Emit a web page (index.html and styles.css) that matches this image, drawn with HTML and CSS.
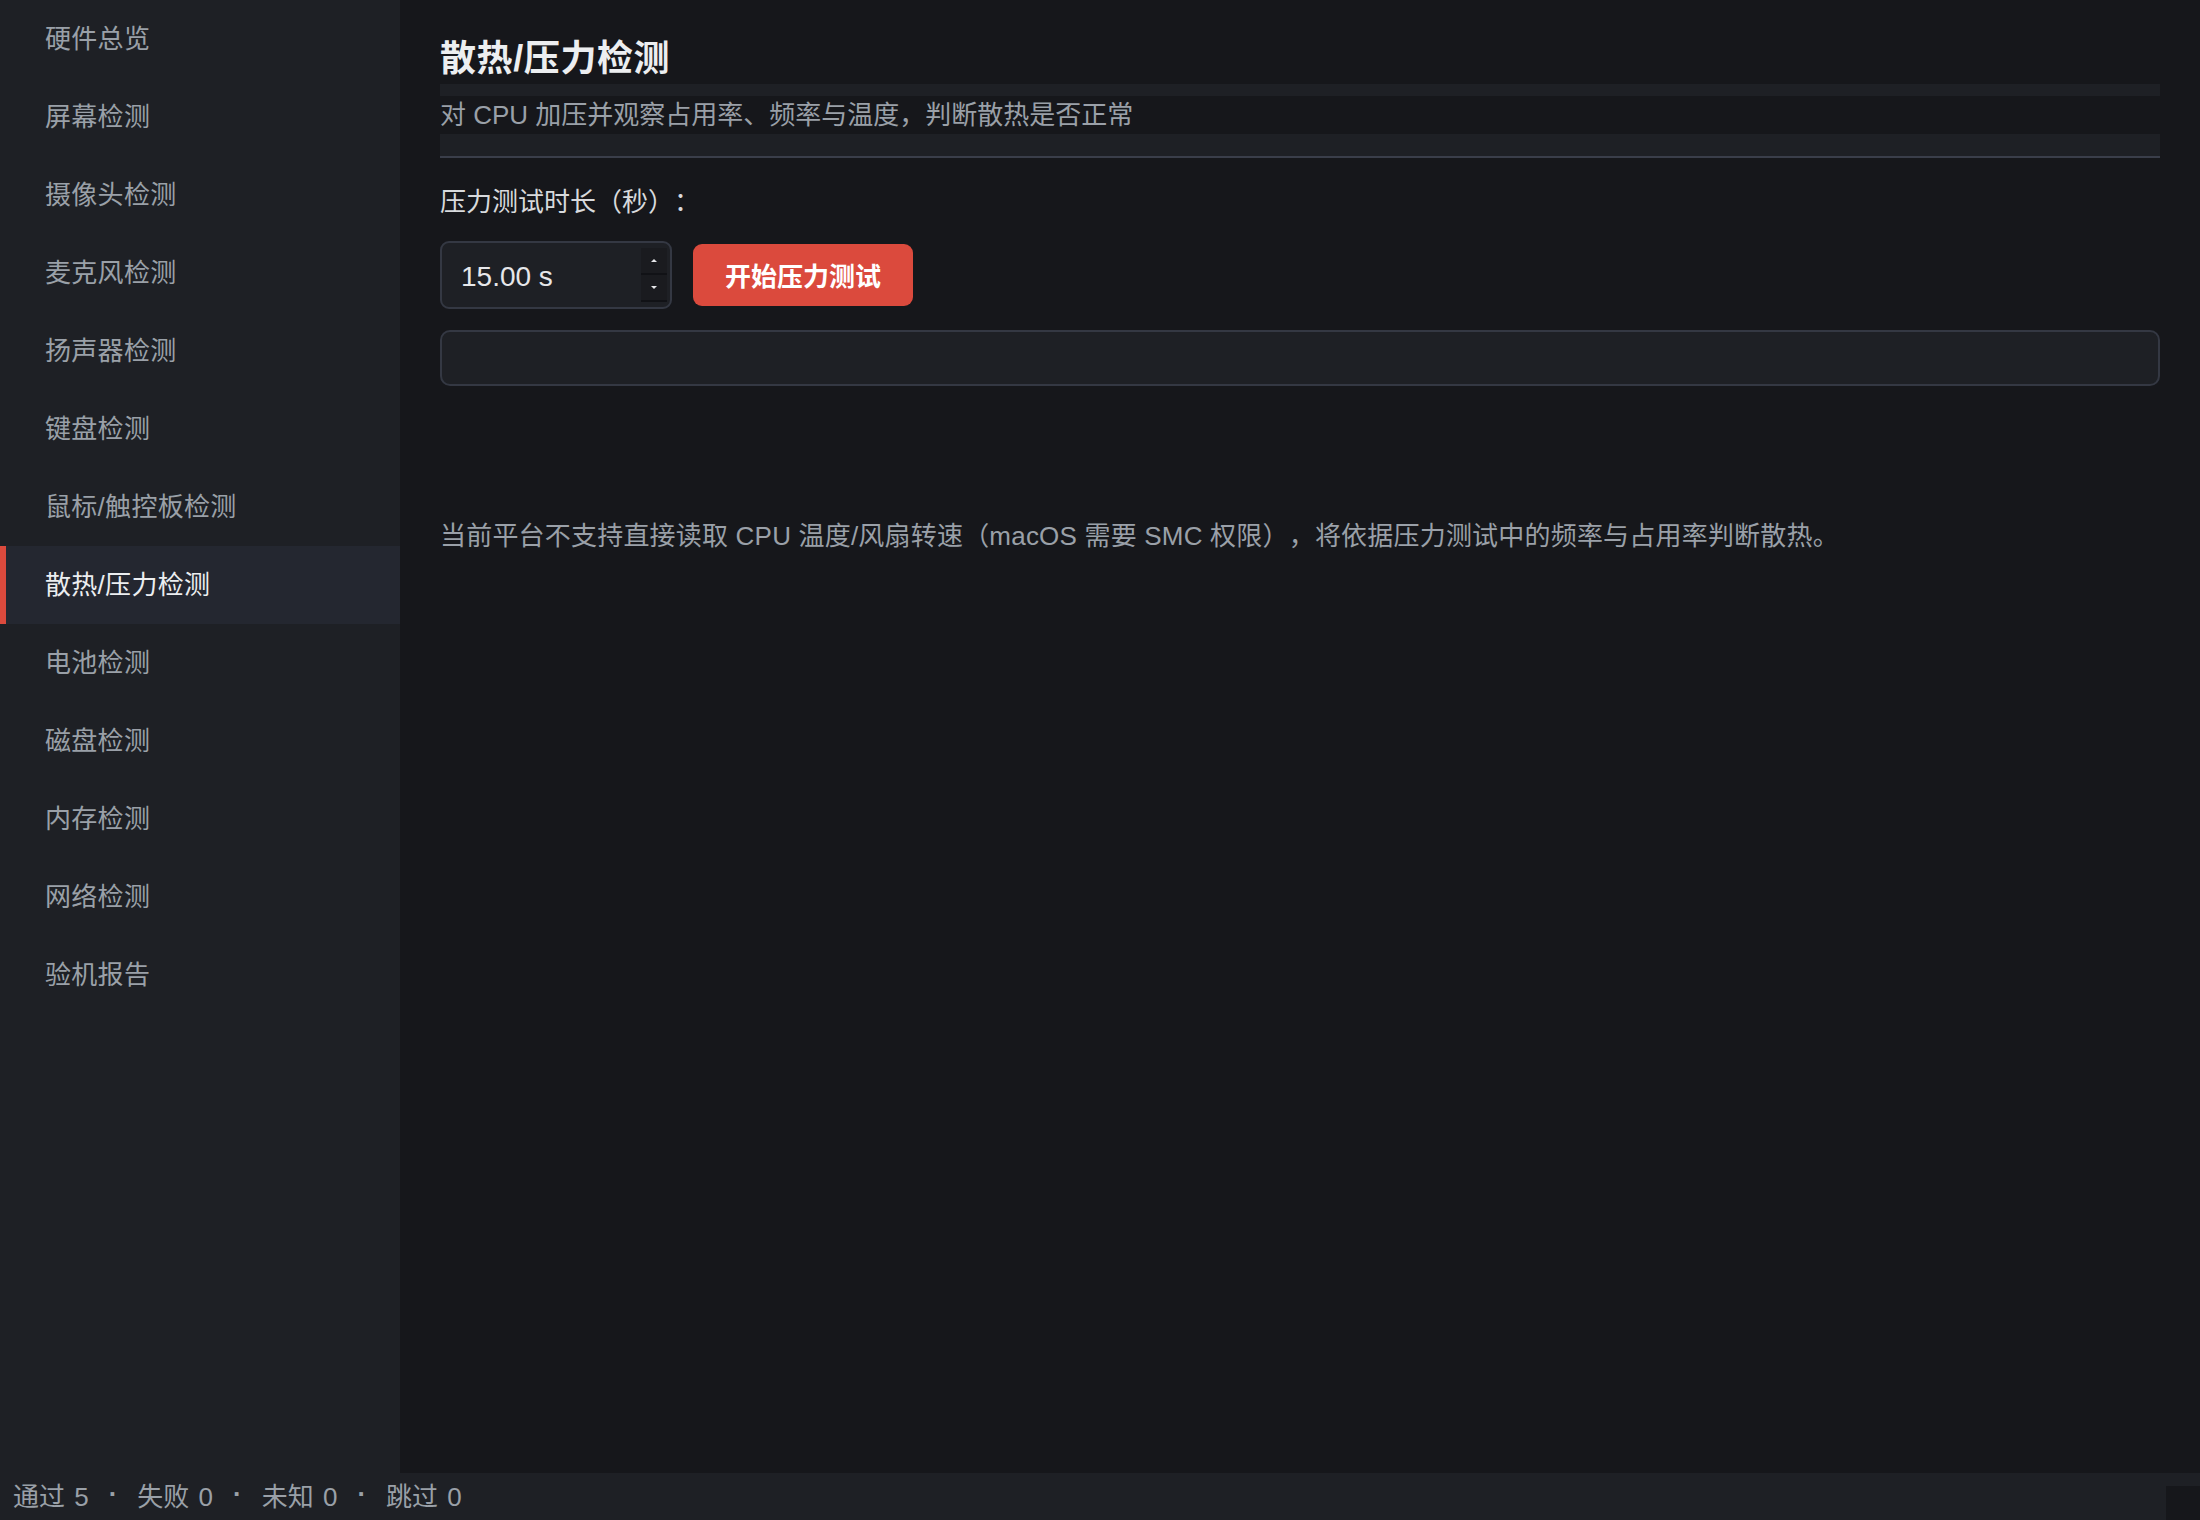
FILE: index.html
```html
<!DOCTYPE html>
<html lang="zh-CN">

<head>
    <meta charset="UTF-8">
    <meta name="viewport" content="width=device-width, initial-scale=1.0">
    <title>验机助手</title>
    <link rel="stylesheet" href="styles.css">
</head>

<body>

    <div id="app">
        <nav class="sidebar">
            <a class="nav-item">硬件总览</a>
            <a class="nav-item">屏幕检测</a>
            <a class="nav-item">摄像头检测</a>
            <a class="nav-item">麦克风检测</a>
            <a class="nav-item">扬声器检测</a>
            <a class="nav-item">键盘检测</a>
            <a class="nav-item">鼠标/触控板检测</a>
            <a class="nav-item active">散热/压力检测</a>
            <a class="nav-item">电池检测</a>
            <a class="nav-item">磁盘检测</a>
            <a class="nav-item">内存检测</a>
            <a class="nav-item">网络检测</a>
            <a class="nav-item">验机报告</a>
        </nav>

        <main class="page">
            <h1 class="page-title">散热/压力检测</h1>
            <div class="desc-box">
                <p class="desc">对 CPU 加压并观察占用率、频率与温度，判断散热是否正常</p>
            </div>

            <label class="field-label">压力测试时长（秒）：</label>

            <div class="control-row">
                <div class="spinbox">
                    <span class="spin-value">15.00 s</span>
                    <div class="spin-btns">
                        <button class="spin-btn"><span class="arrow-up"></span></button>
                        <button class="spin-btn"><span class="arrow-down"></span></button>
                    </div>
                </div>
                <button class="btn-start">开始压力测试</button>
            </div>

            <div class="progress"></div>

            <p class="note">当前平台不支持直接读取 CPU 温度/风扇转速（macOS 需要 SMC 权限），将依据压力测试中的频率与占用率判断散热。</p>
        </main>
    </div>

    <footer class="statusbar">
        <div class="stats">
            <span>通过 5</span>
            <span class="dot">·</span>
            <span>失败 0</span>
            <span class="dot">·</span>
            <span>未知 0</span>
            <span class="dot">·</span>
            <span>跳过 0</span>
        </div>
        <div class="grip"></div>
    </footer>

</body>

</html>
```

FILE: styles.css
```css
* {
    padding: 0;
    margin: 0;
    box-sizing: border-box;
}

body {
    height: 100vh;
    display: flex;
    flex-direction: column;
    background-color: #16171b;
    font-family: "Liberation Sans", "Noto Sans CJK SC", sans-serif;
    font-size: 26px;
    color: #9aa0a8;
    text-spacing-trim: space-all;
}

#app {
    flex: 1;
    display: flex;
    min-height: 0;
}

/* left menu */
.sidebar {
    width: 400px;
    flex-shrink: 0;
    background-color: #1e2025;
    display: flex;
    flex-direction: column;
}

.nav-item {
    height: 78px;
    display: flex;
    align-items: center;
    padding-left: 39px;
    padding-bottom: 5px;
    color: #9aa0a8;
    border-left: 6px solid transparent;
    letter-spacing: 0.3px;
}

.nav-item.active {
    background-color: #242730;
    border-left-color: #db4a3d;
    color: #eceef0;
}

/* right side */
.page {
    flex: 1;
    padding: 36px 40px 0 40px;
}

.page-title {
    font-size: 36px;
    line-height: 45px;
    margin-bottom: 3px;
    font-weight: bold;
    color: #eceef0;
    letter-spacing: 0.6px;
}

.desc-box {
    background-color: #1e2025;
    padding: 12px 0 22px 0;
    border-bottom: 2px solid #3a3e4a;
}

.desc {
    background-color: #16171b;
    line-height: 38px;
    color: #9aa0a8;
}

.field-label {
    display: block;
    margin-top: 24px;
    padding-top: 2px;
    line-height: 36px;
    color: #d8dadd;
}

.control-row {
    display: flex;
    align-items: center;
    gap: 21px;
    margin-top: 21px;
}

.spinbox {
    width: 232px;
    height: 68px;
    display: flex;
    align-items: center;
    background-color: #1e2025;
    border: 2px solid #343843;
    border-radius: 9px;
    padding: 0 3px 0 19px;
}

.spin-value {
    flex: 1;
    font-size: 28px;
    padding-top: 3px;
    color: #e6e7ea;
}

.spin-btns {
    display: flex;
    flex-direction: column;
    width: 26px;
}

.spin-btn {
    height: 27px;
    border: none;
    border-bottom: 2px solid #111216;
    background-color: #1a1b1f;
    display: flex;
    align-items: center;
    justify-content: center;
}

.arrow-up {
    border-left: 3px solid transparent;
    border-right: 3px solid transparent;
    border-bottom: 3px solid #e6e7ea;
}

.arrow-down {
    border-left: 3px solid transparent;
    border-right: 3px solid transparent;
    border-top: 3px solid #e6e7ea;
}

.btn-start {
    height: 62px;
    padding: 0 32px 2px 32px;
    border: none;
    border-radius: 9px;
    background-color: #db4a3d;
    color: #ffffff;
    font-family: inherit;
    font-size: 26px;
    font-weight: bold;
}

.progress {
    margin-top: 21px;
    height: 56px;
    background-color: #1e2025;
    border: 2px solid #343843;
    border-radius: 10px;
}

.note {
    margin-top: 132px;
    line-height: 36px;
    color: #9aa0a8;
    letter-spacing: 0.2px;
}

/* bottom bar */
.statusbar {
    height: 47px;
    flex-shrink: 0;
    background-color: #1e2025;
    display: flex;
    justify-content: space-between;
}

.stats {
    display: flex;
    align-items: center;
    gap: 20px;
    padding-left: 13px;
    padding-bottom: 5px;
    word-spacing: 2px;
}

.dot {
    font-weight: bold;
}

.grip {
    width: 34px;
    height: 34px;
    align-self: flex-end;
    background-color: #16171b;
}
```
